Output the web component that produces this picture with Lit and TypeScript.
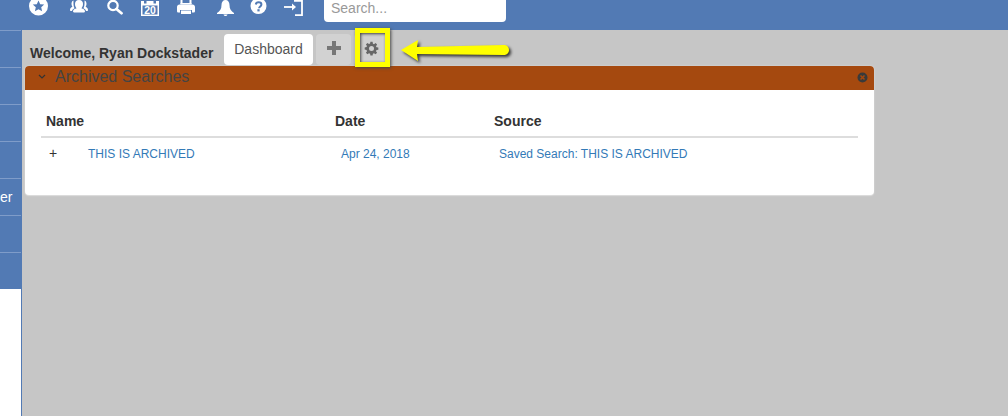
import { LitElement, html, css, svg } from "lit";
import { customElement } from "lit/decorators.js";

const W = "#fff";
const B = "#527ab4";

const icons = [
  { w: 20, gap: 29, d: svg`<circle cx="9.500" cy="6" r="9.500" fill="${W}"/><path d="M9.500 0.500l1.700 3.700 4 .4-3 2.700.9 4-3.600-2.100-3.600 2.100.9-4-3-2.700 4-.4z" fill="${B}"/>` },
  { w: 18, gap: 21, d: svg`<path d="M9 0c3 0 4 2 4 4s-.8 3.400-1.600 4.200c1.600.7 3.600 1.200 3.600 3.300 0 .5-.5.9-1 .9H4c-.5 0-1-.4-1-.9 0-2.100 2-2.600 3.600-3.300C5.800 7.400 5 6 5 4s1-4 4-4z" fill="${W}"/><path d="M3.500 0.500C1.800 1 1.500 2.500 1.500 4c0 1 .4 2 .9 2.700C1.200 7.400 0 8 0 10c0 .6.400 1 1 1h1c.3-1.500 1.500-2.200 2.600-2.800C3.800 7 3.300 5.500 3.500 .5zM14.500 .5C16.200 1 16.500 2.500 16.500 4c0 1-.4 2-.9 2.700C16.800 7.400 18 8 18 10c0 .6-.4 1-1 1h-1c-.3-1.500-1.500-2.200-2.600-2.800C14.200 7 14.700 5.500 14.500 .5z" fill="${W}"/>` },
  { w: 16, gap: 19, d: svg`<circle cx="6" cy="5.500" r="4.700" fill="none" stroke="${W}" stroke-width="2.200"/><path d="M9.500 9l5 4.200" stroke="${W}" stroke-width="2.800" stroke-linecap="round"/>` },
  { w: 18, gap: 18, d: svg`<path d="M0 1h18v15H0z" fill="${W}"/><rect x="1.500" y="5.500" width="15" height="9" fill="${B}"/><rect x="3" y="0" width="2.500" height="3.500" fill="${B}"/><rect x="12.500" y="0" width="2.500" height="3.500" fill="${B}"/><text x="9" y="14" text-anchor="middle" class="cal">20</text>` },
  { w: 18, gap: 18, d: svg`<path d="M4.500 0v4M13.500 0v4" stroke="${W}" stroke-width="2"/><path d="M2.500 4.500h13c1.400 0 2.500 1 2.500 2.500v4c0 1-.6 1.500-1.500 1.500h-1.500V10H3v2.500H1.500C.6 12.500 0 12 0 11V7c0-1.500 1.100-2.500 2.500-2.500z" fill="${W}"/><rect x="4" y="10.500" width="10" height="3.500" fill="${W}"/><rect x="3.500" y="3" width="11" height="1.500" fill="${W}"/>` },
  { w: 17, gap: 22, d: svg`<path d="M8.500 0c2.500 0 4 2 4 5 0 4 1.500 6 4.500 8v1H0v-1c3-2 4.500-4 4.500-8 0-3 1.500-5 4-5z" fill="${W}"/><path d="M6.500 14.500h4c0 .8-1 1.500-2 1.500s-2-.7-2-1.500z" fill="${W}"/>` },
  { w: 17, gap: 16, d: svg`<circle cx="8.500" cy="6" r="8" fill="${W}"/><path d="M5.800 4.500c.2-1.500 1.300-2.200 2.800-2.200 1.600 0 2.800.9 2.800 2.300 0 1.900-2.300 1.900-2.300 3.700" fill="none" stroke="${B}" stroke-width="2"/><rect x="7.400" y="9.200" width="2.200" height="2.200" fill="${B}"/>` },
  { w: 19, gap: 17, d: svg`<path d="M0 7h9" stroke="${W}" stroke-width="1.800"/><path d="M8 3.500l4 3.500-4 3.500z" fill="${W}"/><path d="M10 0.800h8v14.400h-7" fill="none" stroke="${W}" stroke-width="1.800"/>` },
];

const rows = [1, 2, 3, 4, 5, 6, 7];

@customElement("app-root")
export class AppRoot extends LitElement {
  static styles = css`
    :host {
      display: block;
      width: 1008px;
      height: 416px;
      overflow: hidden;
      position: relative;
      font-family: "Liberation Sans", Arial, sans-serif;
      background: #c6c6c6;
      color: #333;
    }
    .top {
      height: 30px;
      background: #527ab4;
      display: flex;
      align-items: flex-start;
      overflow: hidden;
    }
    .top svg { display: block; flex: none; }
    .top svg .cal { font: bold 10.5px "Liberation Sans", sans-serif; fill: #fff; }
    .search {
      box-sizing: border-box;
      width: 182px;
      height: 28px;
      margin: -6px 0 0 21px;
      border: 0;
      border-radius: 4px;
      padding: 0 7px;
      background: #fff;
      font: 14px "Liberation Sans", sans-serif;
      flex: none;
    }
    .search::placeholder { color: #999; opacity: 1; }
    .body { display: flex; height: 386px; }
    .side {
      flex: none;
      width: 22px;
      display: flex;
      flex-direction: column;
      background: #fff;
      border-right: 1px solid #527ab4;
      box-sizing: border-box;
    }
    .side-item {
      box-sizing: border-box;
      height: 37px;
      background: #527ab4;
      border-top: 1px solid #7f9cc9;
      color: #fff;
      font-size: 14px;
      line-height: 36px;
      flex: none;
    }
    .main { flex: 1; min-width: 0; }
    .tabbar {
      height: 36px;
      display: flex;
      align-items: flex-start;
      padding: 4px 0 0 8px;
      box-sizing: border-box;
    }
    .welcome {
      font-size: 14px;
      font-weight: bold;
      line-height: 16px;
      margin-top: 11px;
      width: 194px;
      color: #333;
    }
    .tab {
      box-sizing: border-box;
      height: 31px;
      border-radius: 4px;
      display: flex;
      align-items: center;
      justify-content: center;
    }
    .tab.active {
      width: 89px;
      padding-bottom: 2px;
      background: #fff;
      font-size: 14px;
      color: #555;
    }
    .tab.add {
      width: 35px;
      margin-left: 3px;
      padding-bottom: 3px;
      background: #d2d2d2;
    }
    .tab.gear {
      width: 35px;
      margin-left: 3px;
      padding-bottom: 3px;
      background: #d0d0d0;
    }
    .panel {
      width: 849px;
      height: 129px;
      margin-left: 3px;
      background: #fff;
      border-radius: 4px;
      box-shadow: 0 0 2px #ddd, 0 1px 1px #ddd;
      overflow: hidden;
    }
    .panel-head {
      height: 24px;
      box-sizing: border-box;
      background: #a5490f;
      display: flex;
      align-items: center;
      padding: 0 6px 2px 13px;
      color: #444;
      font-size: 16px;
    }
    .panel-head .title { margin-left: 9px; flex: 1; line-height: 22px; }
    .panel-body { padding: 23px 16px 0 16px; }
    .grid-head, .grid-row { display: grid; }
    .grid-head {
      grid-template-columns: 289px 159px 1fr;
      border-bottom: 2px solid #ddd;
      font-size: 14px;
      font-weight: bold;
      color: #333;
      line-height: 16px;
      padding: 0 0 7px 5px;
    }
    .grid-row {
      grid-template-columns: 289px 158px 1fr;
      padding: 9px 0 0 11px;
      font-size: 12px;
      line-height: 14px;
      color: #337ab7;
    }
    .name { display: flex; }
    .plus { width: 39px; margin-left: -3px; flex: none; color: #333; font-size: 14px; line-height: 12px; }
    .flag {
      position: absolute;
      left: 355px;
      top: 28px;
      width: 35px;
      height: 39px;
      box-sizing: border-box;
      border: 5px solid #ffff00;
      box-shadow: 1px 1px 3px #444, inset 1px 1px 3px #444;
    }
    .arrow {
      position: absolute;
      left: 398px;
      top: 36px;
      filter: drop-shadow(2px 2px 1.500px #333);
    }
  `;

  render() {
    return html`
      <div class="top">
        ${icons.map(
          (ic) => html`<svg width=${ic.w} height="16" viewBox="0 0 ${ic.w} 16" style="margin-left:${ic.gap}px">${ic.d}</svg>`
        )}
        <input class="search" placeholder="Search..." />
      </div>
      <div class="body">
        <nav class="side">
          ${rows.map(
            (n) => html`<div class="side-item">${n === 5 ? "er" : ""}</div>`
          )}
        </nav>
        <main class="main">
          <div class="tabbar">
            <div class="welcome">Welcome, Ryan Dockstader</div>
            <div class="tab active">Dashboard</div>
            <div class="tab add">
              <svg width="14" height="14" viewBox="0 0 14 14"><path d="M5 0h4v5h5v4H9v5H5V9H0V5h5z" fill="#777"/></svg>
            </div>
            <div class="tab gear">
              <svg width="15" height="15" viewBox="-1 -1 18 18">
                <path fill-rule="evenodd" fill="#666" d="M6.700 0h2.600l.4 2.200 1.300.6 1.900-1.300 1.800 1.800-1.300 1.900.6 1.300 2.200.4v2.600l-2.200.4-.6 1.300 1.300 1.900-1.800 1.800-1.900-1.300-1.300.6-.4 2.200H6.700l-.4-2.200-1.300-.6-1.900 1.300-1.800-1.800 1.300-1.900-.6-1.300L-.2 9.300V6.700L2 6.300l.6-1.300-1.300-1.900L3.100 1.300 5 2.600l1.300-.6zM8 5a3 3 0 1 0 0 6 3 3 0 0 0 0-6z"/>
              </svg>
            </div>
          </div>
          <section class="panel">
            <div class="panel-head">
              <svg width="8" height="6" viewBox="0 0 8 6"><path d="M1 1l3 3 3-3" fill="none" stroke="#333" stroke-width="1.200"/></svg>
              <span class="title">Archived Searches</span>
              <svg width="11" height="11" viewBox="0 0 11 11"><circle cx="5.500" cy="5.500" r="5" fill="#3a3a3a"/><path d="M3.500 3.500l4 4M7.500 3.500l-4 4" stroke="#a5490f" stroke-width="1.600"/></svg>
            </div>
            <div class="panel-body">
              <div class="grid-head"><span>Name</span><span>Date</span><span>Source</span></div>
              <div class="grid-row">
                <span class="name"><span class="plus">+</span><span>THIS IS ARCHIVED</span></span>
                <span>Apr 24, 2018</span>
                <span>Saved Search: THIS IS ARCHIVED</span>
              </div>
            </div>
          </section>
        </main>
      </div>
      <div class="flag"></div>
      <svg class="arrow" width="116" height="30" viewBox="398 36 116 30">
        <path fill="#ffff00" d="M401 50l17-10-1 7 87-2c3 0 5 2.200 5 5s-2 5-5 5l-87-1 1 7z"/>
      </svg>
    `;
  }
}
